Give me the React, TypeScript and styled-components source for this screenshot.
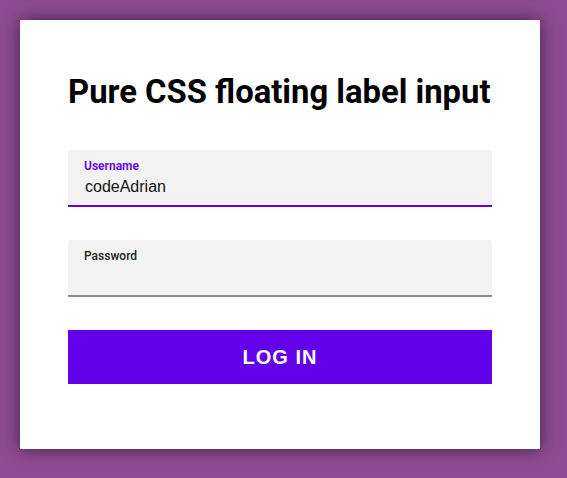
import React from "react";
import styled, { createGlobalStyle } from "styled-components";

const GlobalStyle = createGlobalStyle`
  html, body {
    margin: 0;
    padding: 0;
    background: #8e4b91;
    font-family: Roboto, "Liberation Sans", Arial, sans-serif;
  }
  * {
    box-sizing: border-box;
  }
`;

const Page = styled.div`
  padding: 20px;
  min-height: 478px;
`;

const Card = styled.form`
  width: 520px;
  height: 429px;
  background: #fff;
  padding: 48px 48px 0;
  box-shadow: 0 0 16px rgba(0, 0, 0, 0.55);
  display: flex;
  flex-direction: column;
`;

const Title = styled.h1`
  margin: 4px 0 38px;
  font-family: Roboto, sans-serif;
  font-weight: 700;
  font-size: 32.8px;
  line-height: 40px;
  color: #000;
  white-space: nowrap;
`;

const Fields = styled.div`
  display: flex;
  flex-direction: column;
  gap: 33px;
`;

const Field = styled.div<{ $active?: boolean }>`
  height: 57px;
  background: #f3f3f3;
  border-radius: 3px 3px 0 0;
  border-bottom: 2px solid ${(p) => (p.$active ? "#6200ea" : "#8c8c8c")};
  padding: 9px 16px 0;
  display: flex;
  flex-direction: column;
`;

const Label = styled.label<{ $active?: boolean }>`
  font-family: Roboto, sans-serif;
  font-size: 12px;
  line-height: 14px;
  font-weight: ${(p) => (p.$active ? 700 : 500)};
  color: ${(p) => (p.$active ? "#6a11e6" : "#222")};
`;

const Input = styled.input`
  margin-top: 4px;
  border: none;
  outline: none;
  background: transparent;
  padding: 0 0 0 1px;
  height: 20px;
  font-family: "Liberation Sans", Arial, sans-serif;
  font-size: 16px;
  color: #111;
`;

const Button = styled.button`
  margin-top: 33px;
  height: 54px;
  border: none;
  background: #6200ea;
  color: #fff;
  font-family: "Liberation Sans", Arial, sans-serif;
  font-weight: 700;
  font-size: 20px;
  letter-spacing: 1px;
  text-transform: uppercase;
  cursor: pointer;
`;

export default function App() {
  return (
    <Page>
      <GlobalStyle />
      <Card onSubmit={(e) => e.preventDefault()}>
        <Title>Pure CSS floating label input</Title>
        <Fields>
          <Field $active>
            <Label $active htmlFor="username">Username</Label>
            <Input id="username" defaultValue="codeAdrian" />
          </Field>
          <Field>
            <Label htmlFor="password">Password</Label>
            <Input id="password" type="password" />
          </Field>
        </Fields>
        <Button type="submit">Log in</Button>
      </Card>
    </Page>
  );
}
